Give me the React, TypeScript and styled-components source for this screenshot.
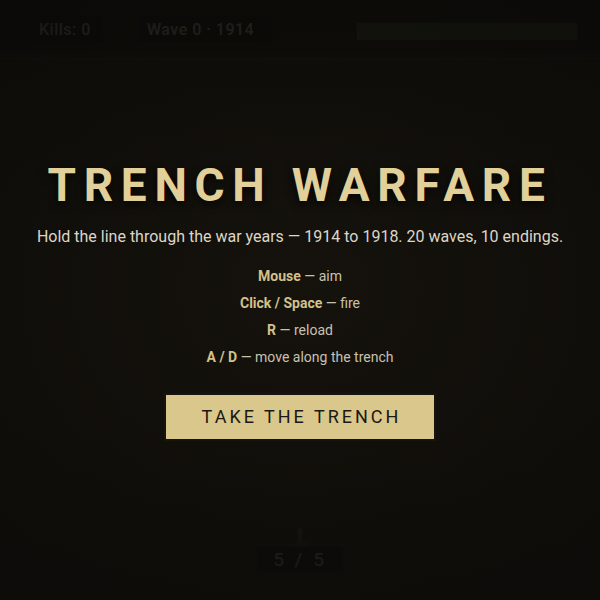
import React from "react";
import styled, { createGlobalStyle } from "styled-components";

const Global = createGlobalStyle`
  html, body { margin: 0; padding: 0; background: #12110d; }
  body { font-family: Roboto, "Liberation Sans", sans-serif; }
`;

const Stage = styled.div`
  position: relative;
  width: 600px;
  height: 600px;
  overflow: hidden;
  background:
    linear-gradient(180deg, #1b1a16 0px, #1d1b16 52px, #2e281d 56px, #3f3526 200px, #403627 420px, #2e281d 600px);
`;

/* game HUD, drawn under the menu veil */
const Hud = styled.div`
  position: absolute;
  top: 15px;
  left: 30px;
  right: 22px;
  display: flex;
  align-items: center;
  gap: 34px;
`;

const Chip = styled.div<{ $wide?: boolean }>`
  padding: 4px 8px;
  height: 19px;
  background: rgba(0, 0, 0, 0.55);
  border: 1px solid rgba(255, 255, 255, 0.08);
  color: #e7dec8;
  font-size: 16px;
  font-weight: 500;
  letter-spacing: 0.5px;
  line-height: 19px;
  min-width: ${(p) => (p.$wide ? "118px" : "56px")};
`;

const Morale = styled.div`
  margin-left: auto;
  width: 220px;
  height: 17px;
  margin-top: 4px;
  background: #55603f;
  border: 1px solid rgba(0, 0, 0, 0.6);
`;

const Parapet = styled.div`
  position: absolute;
  left: 0;
  right: 0;
  top: 58px;
  height: 2px;
  background: rgba(120, 100, 70, 0.25);
`;

const Player = styled.svg`
  position: absolute;
  left: 291px;
  top: 526px;
  opacity: 0.6;
`;

const Ammo = styled.div`
  position: absolute;
  left: 257px;
  top: 547px;
  width: 86px;
  height: 25px;
  background: rgba(0, 0, 0, 0.5);
  color: #cfc8b6;
  font-size: 19px;
  letter-spacing: 3px;
  text-align: center;
  line-height: 25px;
`;

const Veil = styled.div`
  position: absolute;
  inset: 0;
  background:
    radial-gradient(ellipse 70% 60% at 50% 48%, rgba(14, 12, 8, 0.6), rgba(10, 9, 7, 0.82) 100%);
  background-color: rgba(12, 11, 8, 0.6);
  display: flex;
  flex-direction: column;
  align-items: center;
  justify-content: center;
  padding-bottom: 2px;
`;

const Title = styled.h1`
  margin: 0 0 14px 0;
  font-size: 46px;
  font-weight: 700;
  letter-spacing: 7.7px;
  line-height: 54px;
  color: #e1d09a;
  text-shadow: 0 3px 10px rgba(0, 0, 0, 0.8);
`;

const Lead = styled.p`
  margin: 0 0 18px;
  font-size: 16px;
  line-height: 22px;
  color: #ddd6c6;
`;

const Keys = styled.ul`
  list-style: none;
  margin: 0 0 25px;
  padding: 0;
  display: flex;
  flex-direction: column;
  align-items: center;
  gap: 6px;
`;

const Key = styled.li`
  font-size: 14px;
  line-height: 21px;
  color: #c9c1ae;

  b {
    color: #d3c08b;
    font-weight: 700;
  }
`;

const Start = styled.button`
  width: 272px;
  height: 48px;
  border: 2px solid #17140e;
  outline: none;
  background: #d9c78b;
  color: #1c1812;
  font-family: Roboto, "Liberation Sans", sans-serif;
  font-size: 18px;
  letter-spacing: 3px;
  padding: 0 0 0 3px;
  cursor: pointer;
`;

const controls: [string, string][] = [
  ["Mouse", "aim"],
  ["Click / Space", "fire"],
  ["R", "reload"],
  ["A / D", "move along the trench"],
];

export default function App() {
  return (
    <Stage>
      <Global />
      <Parapet />
      <Hud>
        <Chip>Kills: 0</Chip>
        <Chip $wide>Wave 0 · 1914</Chip>
        <Morale />
      </Hud>
      <Player width="18" height="20" viewBox="0 0 18 20">
        <path d="M9 1 L12 7 H6 Z" fill="#9a9488" />
        <rect x="7" y="7" width="4" height="10" fill="#7a7466" />
        <rect x="1" y="17" width="16" height="2" fill="#6b6555" />
      </Player>
      <Ammo>5 / 5</Ammo>
      <Veil>
        <Title>TRENCH WARFARE</Title>
        <Lead>Hold the line through the war years — 1914 to 1918. 20 waves, 10 endings.</Lead>
        <Keys>
          {controls.map(([k, v]) => (
            <Key key={k}>
              <b>{k}</b> — {v}
            </Key>
          ))}
        </Keys>
        <Start>TAKE THE TRENCH</Start>
      </Veil>
    </Stage>
  );
}
